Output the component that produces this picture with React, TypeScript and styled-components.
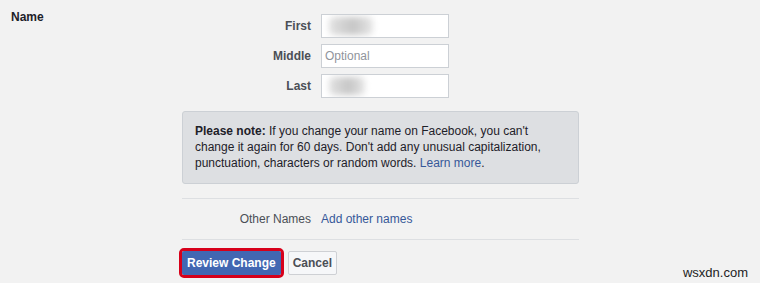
import React from "react";
import styled, { createGlobalStyle } from "styled-components";

const GlobalStyle = createGlobalStyle`
  html, body {
    margin: 0;
    padding: 0;
    background: #f2f2f2;
    font-family: "Liberation Sans", Arial, Helvetica, sans-serif;
    font-size: 12px;
    color: #1d2129;
  }
`;

const Page = styled.div`
  position: relative;
  width: 760px;
  height: 283px;
  display: grid;
  grid-template-columns: 182px 397px;
  padding-top: 10px;
  box-sizing: border-box;
  overflow: hidden;
`;

const SectionTitle = styled.div`
  padding-left: 11px;
  font-weight: bold;
  line-height: 14px;
`;

const Content = styled.div`
  display: flex;
  flex-direction: column;
  padding-top: 4px;
`;

const Fields = styled.div`
  display: flex;
  flex-direction: column;
  gap: 6px;
`;

const FieldRow = styled.label`
  display: flex;
  align-items: center;
  gap: 10px;
  height: 24px;
`;

const FieldLabel = styled.span`
  width: 129px;
  text-align: right;
  font-weight: bold;
  color: #4b4f56;
`;

const InputBox = styled.div`
  position: relative;
  width: 128px;
  height: 24px;
  box-sizing: border-box;
  border: 1px solid #ccd0d5;
  background: #fff;
  display: flex;
  align-items: center;
  padding-left: 3px;
  overflow: hidden;
`;

const Placeholder = styled.span`
  color: #90949c;
`;

const Blurred = styled.span<{ $w: number }>`
  display: block;
  width: ${(p) => p.$w}px;
  height: 18px;
  margin-left: 4px;
  background: linear-gradient(90deg, #e2e2e2, #c6c6c6 55%, #e6e6e6);
  border-radius: 5px;
  filter: blur(3px);
`;

const Note = styled.div`
  margin-top: 13px;
  background: #dddfe2;
  border: 1px solid #ccd0d5;
  border-radius: 3px;
  padding: 11px 12px 12px;
  line-height: 16px;
  color: #1d2129;
`;

const Link = styled.a`
  color: #365899;
  text-decoration: none;
  cursor: pointer;
`;

const Divider = styled.hr<{ $gap?: number }>`
  margin: ${(p) => p.$gap ?? 0}px 0 0;
  border: 0;
  border-top: 1px solid #dddfe2;
`;

const OtherRow = styled.div`
  display: flex;
  align-items: center;
  gap: 10px;
  height: 40px;
`;

const OtherLabel = styled.span`
  width: 129px;
  text-align: right;
  color: #4b4f56;
`;

const Actions = styled.div`
  display: flex;
  align-items: center;
  gap: 4px;
  margin-top: 8px;
`;

const Highlight = styled.div`
  margin-left: -3px;
  border: 3px solid #d7001a;
  border-radius: 5px;
  display: flex;
`;

const Button = styled.button<{ $primary?: boolean }>`
  height: 24px;
  padding: 0 ${(p) => (p.$primary ? 4 : 4)}px;
  font-family: inherit;
  font-size: 12px;
  font-weight: bold;
  border-radius: 2px;
  border: 1px solid ${(p) => (p.$primary ? "#4267b2" : "#ced0d4")};
  background: ${(p) => (p.$primary ? "#4267b2" : "#f6f7f9")};
  color: ${(p) => (p.$primary ? "#fff" : "#4b4f56")};
  cursor: pointer;
`;

const Watermark = styled.div`
  position: absolute;
  right: 12px;
  bottom: 3px;
  font-size: 13px;
  color: #222;
`;

const App: React.FC = () => {
  return (
    <>
      <GlobalStyle />
      <Page>
        <SectionTitle>Name</SectionTitle>
        <Content>
          <Fields>
            <FieldRow>
              <FieldLabel>First</FieldLabel>
              <InputBox>
                <Blurred $w={44} />
              </InputBox>
            </FieldRow>
            <FieldRow>
              <FieldLabel>Middle</FieldLabel>
              <InputBox>
                <Placeholder>Optional</Placeholder>
              </InputBox>
            </FieldRow>
            <FieldRow>
              <FieldLabel>Last</FieldLabel>
              <InputBox>
                <Blurred $w={36} />
              </InputBox>
            </FieldRow>
          </Fields>
          <Note>
            <b>Please note:</b> If you change your name on Facebook, you can't
            change it again for 60 days. Don't add any unusual capitalization,
            punctuation, characters or random words. <Link>Learn more</Link>.
          </Note>
          <Divider $gap={14} />
          <OtherRow>
            <OtherLabel>Other Names</OtherLabel>
            <Link>Add other names</Link>
          </OtherRow>
          <Divider />
          <Actions>
            <Highlight>
              <Button $primary>Review Change</Button>
            </Highlight>
            <Button>Cancel</Button>
          </Actions>
        </Content>
        <Watermark>wsxdn.com</Watermark>
      </Page>
    </>
  );
};

export default App;
